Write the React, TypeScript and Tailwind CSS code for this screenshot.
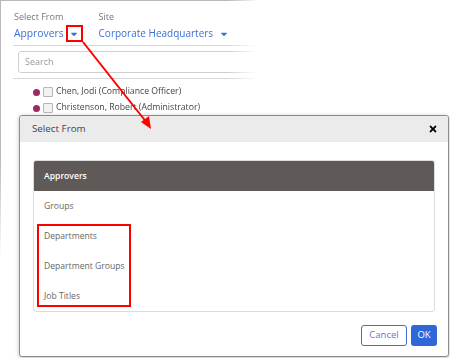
import { FaCaretDown, FaTimes } from "react-icons/fa";

const people: string[] = ["Chen, Jodi (Compliance Officer)", "Christenson, Robert (Administrator)"];
const options: string[] = ["Groups", "Departments", "Department Groups", "Job Titles"];

export default function App() {
  return (
    <div className="relative w-[450px] h-[358px] bg-white overflow-hidden font-['Open_Sans',sans-serif]">
      {/* Background screen, faded out */}
      <div className="w-[258px] h-[260px] [mask-image:linear-gradient(to_right,black_88%,transparent)]">
        <div className="h-full border-l border-t border-[#b8b8b8] pt-[10px] [mask-image:linear-gradient(to_bottom,black_60%,transparent)]">
          <div className="flex gap-x-[16px] pl-[13px]">
            <div className="flex flex-col">
              <span className="text-[9px] leading-[12px] text-[#777]">Select From</span>
              <div className="flex items-center mt-[2px] h-[17px]">
                <span className="text-[10.3px] text-[#3c6fd6] whitespace-nowrap">Approvers</span>
                <div className="ml-[2px] w-[17px] h-[17px] border-2 border-[#f00] flex items-center justify-center">
                  <FaCaretDown className="text-[#3c6fd6] text-[10px]" />
                </div>
              </div>
            </div>
            <div className="flex flex-col">
              <span className="text-[9px] leading-[12px] text-[#777]">Site</span>
              <div className="flex items-center mt-[2px] h-[17px]">
                <span className="text-[10px] text-[#3c6fd6] whitespace-nowrap">Corporate Headquarters</span>
                <FaCaretDown className="ml-[6px] text-[#3c6fd6] text-[10px]" />
              </div>
            </div>
          </div>
          <div className="mt-[3px] ml-[12px] border-t border-[#d6d6d6] pt-[5px] pl-[5px]">
            <div className="h-[22px] border border-[#cfcfcf] rounded-l-[3px] flex items-center pl-[6px]">
              <span className="text-[9px] text-[#999]">Search</span>
            </div>
          </div>
          <div className="mt-[5px] ml-[12px] border-t border-[#d6d6d6] pt-[5px] flex flex-col">
            {people.map((item, index) => (
              <div key={index} className="flex items-center h-[16px] pl-[20px]">
                <span className="w-[7px] h-[7px] rounded-full bg-[#9e2960]" />
                <span className="ml-[3px] w-[10px] h-[10px] border border-[#b5b5b5] bg-[#f1f1f1] rounded-[1px]" />
                <span className="ml-[3px] text-[8.7px] text-[#444] whitespace-nowrap">{item}</span>
              </div>
            ))}
          </div>
        </div>
      </div>

      {/* Dialog */}
      <div className="absolute left-[19px] top-[115px] w-[430px] h-[242px] border border-[#8c8c8c] rounded-[3px] bg-white shadow-[0_1px_4px_rgba(0,0,0,0.25)] flex flex-col overflow-hidden">
        <div className="h-[26px] bg-[#ebebeb] flex items-center justify-between px-[12px] shrink-0">
          <span className="text-[9.8px] text-[#444]">Select From</span>
          <FaTimes className="text-[10px] text-black mr-[-2px]" />
        </div>
        <div className="mt-[18px] mx-[13px] border border-[#dcdcdc] rounded-[3px] overflow-hidden">
          <div className="h-[30px] bg-[#5f5a58] flex items-center pl-[10px]">
            <span className="text-[8.6px] font-semibold text-white">Approvers</span>
          </div>
          <div className="relative flex flex-col">
            {options.map((item, index) => (
              <div key={index} className="h-[30px] flex items-center pl-[10px]">
                <span className="text-[8.6px] text-[#666]">{item}</span>
              </div>
            ))}
            {/* highlight */}
            <div className="absolute left-[3px] top-[33px] w-[94px] h-[83px] border-2 border-[#f00]" />
          </div>
        </div>
        <div className="flex justify-end gap-x-[4px] mt-[13px] mr-[11px]">
          <button className="h-[21px] w-[46px] border border-[#3c6fd6] rounded-[3px] text-[9.5px] text-[#6b73c4] bg-white">Cancel</button>
          <button className="h-[21px] w-[26px] rounded-[3px] text-[9.5px] text-white bg-[#2f66d8]">OK</button>
        </div>
      </div>

      {/* Pointer arrow */}
      <svg className="absolute left-0 top-0 pointer-events-none" width="450" height="358">
        <line x1="83" y1="42" x2="147" y2="123" stroke="#f00" strokeWidth="2" />
        <polygon points="151,129 141,122 149,116" fill="#f00" />
      </svg>
    </div>
  );
}
